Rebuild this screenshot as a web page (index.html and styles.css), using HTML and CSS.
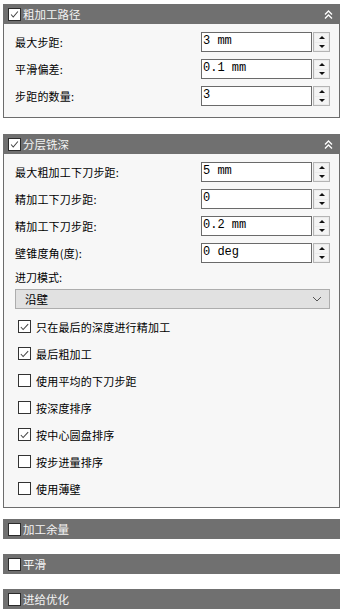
FILE: index.html
```html
<!DOCTYPE html>
<html lang="zh">
<head>
  <meta charset="UTF-8" />
  <meta name="viewport" content="width=device-width, initial-scale=1.0"/>
  <title>粗加工路径</title>
  <link rel="stylesheet" href="styles.css">
</head>
<body>

  <!-- Panel: 粗加工路径 -->
  <div class="panel primero">
    <div class="cabecera">
      <span class="casilla-cab marcada">
        <svg viewBox="0 0 13 13" width="13" height="13"><polyline points="2.5,6.5 5,9.5 10.5,3" /></svg>
      </span>
      <span class="titulo">粗加工路径</span>
      <svg class="plegar" viewBox="0 0 9 9" width="9" height="9"><polyline points="1,4.5 4.5,1 8,4.5" /><polyline points="1,8.5 4.5,5 8,8.5" /></svg>
    </div>
    <div class="cuerpo">
      <div class="fila">
        <span class="etiqueta">最大步距:</span>
        <div class="campo"><span class="valor">3 mm</span></div>
        <div class="flechas"><span class="arriba"></span><span class="abajo"></span></div>
      </div>
      <div class="fila">
        <span class="etiqueta">平滑偏差:</span>
        <div class="campo"><span class="valor">0.1 mm</span></div>
        <div class="flechas"><span class="arriba"></span><span class="abajo"></span></div>
      </div>
      <div class="fila">
        <span class="etiqueta">步距的数量:</span>
        <div class="campo"><span class="valor">3</span></div>
        <div class="flechas"><span class="arriba"></span><span class="abajo"></span></div>
      </div>
    </div>
  </div>

  <!-- Panel: 分层铣深 -->
  <div class="panel">
    <div class="cabecera">
      <span class="casilla-cab marcada">
        <svg viewBox="0 0 13 13" width="13" height="13"><polyline points="2.5,6.5 5,9.5 10.5,3" /></svg>
      </span>
      <span class="titulo">分层铣深</span>
      <svg class="plegar" viewBox="0 0 9 9" width="9" height="9"><polyline points="1,4.5 4.5,1 8,4.5" /><polyline points="1,8.5 4.5,5 8,8.5" /></svg>
    </div>
    <div class="cuerpo con-opciones">
      <div class="fila">
        <span class="etiqueta">最大粗加工下刀步距:</span>
        <div class="campo"><span class="valor">5 mm</span></div>
        <div class="flechas"><span class="arriba"></span><span class="abajo"></span></div>
      </div>
      <div class="fila">
        <span class="etiqueta">精加工下刀步距:</span>
        <div class="campo"><span class="valor">0</span></div>
        <div class="flechas"><span class="arriba"></span><span class="abajo"></span></div>
      </div>
      <div class="fila">
        <span class="etiqueta">精加工下刀步距:</span>
        <div class="campo"><span class="valor">0.2 mm</span></div>
        <div class="flechas"><span class="arriba"></span><span class="abajo"></span></div>
      </div>
      <div class="fila">
        <span class="etiqueta">壁锥度角(度):</span>
        <div class="campo"><span class="valor">0 deg</span></div>
        <div class="flechas"><span class="arriba"></span><span class="abajo"></span></div>
      </div>

      <div class="modo">进刀模式:</div>
      <div class="desplegable">
        <span>沿壁</span>
        <svg viewBox="0 0 10 6" width="10" height="6"><polyline points="1,1 5,5 9,1" /></svg>
      </div>

      <div class="opciones">
        <div class="opcion">
          <span class="casilla marcada"><svg viewBox="0 0 12 12" width="12" height="12"><polyline points="2,6 4.5,8.8 10,2.8" /></svg></span>
          只在最后的深度进行精加工
        </div>
        <div class="opcion">
          <span class="casilla marcada"><svg viewBox="0 0 12 12" width="12" height="12"><polyline points="2,6 4.5,8.8 10,2.8" /></svg></span>
          最后粗加工
        </div>
        <div class="opcion"><span class="casilla"></span>使用平均的下刀步距</div>
        <div class="opcion"><span class="casilla"></span>按深度排序</div>
        <div class="opcion">
          <span class="casilla marcada"><svg viewBox="0 0 12 12" width="12" height="12"><polyline points="2,6 4.5,8.8 10,2.8" /></svg></span>
          按中心圆盘排序
        </div>
        <div class="opcion"><span class="casilla"></span>按步进量排序</div>
        <div class="opcion"><span class="casilla"></span>使用薄壁</div>
      </div>
    </div>
  </div>

  <!-- Paneles plegados -->
  <div class="panel plegado">
    <div class="cabecera"><span class="casilla-cab"></span><span class="titulo">加工余量</span></div>
  </div>
  <div class="panel plegado">
    <div class="cabecera"><span class="casilla-cab"></span><span class="titulo">平滑</span></div>
  </div>
  <div class="panel plegado">
    <div class="cabecera"><span class="casilla-cab"></span><span class="titulo">进给优化</span></div>
  </div>

</body>
</html>
```

FILE: styles.css
```css
body {
  margin: 0;
  background: #ffffff;
  font-family: "Noto Sans CJK SC", "Noto Sans", sans-serif;
  font-size: 11px;
  color: #000;
}

.panel {
  margin: 16px 2px 0 3px;
}

.panel.primero {
  margin-top: 4px;
}

.panel.plegado {
  margin-top: 11px;
}

.panel.plegado + .panel.plegado {
  margin-top: 15px;
}

/* Barra gris del título */
.cabecera {
  height: 20px;
  background: #707070;
  display: flex;
  align-items: center;
  padding: 0 7px 0 5px;
  color: #f4f4f4;
  overflow: hidden;
}

.casilla-cab {
  width: 11px;
  height: 11px;
  border: 1px solid #2b2b2b;
  background: #ffffff;
  display: flex;
  align-items: center;
  justify-content: center;
  flex-shrink: 0;
}

.casilla-cab svg {
  fill: none;
  stroke: #404040;
  stroke-width: 1.2;
}

.titulo {
  margin-left: 2px;
  font-size: 11.5px;
  line-height: 20px;
  flex: 1;
}

.plegar {
  fill: none;
  stroke: #ffffff;
  stroke-width: 1.3;
}

.cuerpo {
  background: #f7f7f7;
  border: 1px solid #6c6c6c;
  border-top: none;
  padding: 8px 9px 11px 11px;
  display: flex;
  flex-direction: column;
  gap: 7px;
}

.cuerpo.con-opciones {
  padding-bottom: 5px;
}

.fila {
  display: flex;
  align-items: center;
  height: 20px;
}

.etiqueta {
  flex: 1;
  line-height: 20px;
  letter-spacing: 0.2px;
}

.campo {
  width: 109px;
  height: 18px;
  border: 1px solid #6a6a6a;
  background: #ffffff;
  display: flex;
  align-items: center;
}

.valor {
  font-family: "Liberation Mono", monospace;
  font-size: 12px;
  padding-left: 1px;
  margin-top: -3px;
}

/* Botones arriba / abajo */
.flechas {
  width: 15px;
  height: 18px;
  margin-left: 1px;
  border: 1px solid #b4b4b4;
  background: #ececec;
  display: flex;
  flex-direction: column;
}

.flechas span {
  flex: 1;
  display: flex;
  align-items: center;
  justify-content: center;
  background: #f4f4f4;
  margin: 1px;
}

.flechas span::after {
  content: "";
  width: 0;
  height: 0;
  border-left: 3px solid transparent;
  border-right: 3px solid transparent;
}

.flechas .arriba::after {
  border-bottom: 3px solid #111;
}

.flechas .abajo {
  margin-top: 0;
}

.flechas .abajo::after {
  border-top: 3px solid #111;
}

.modo {
  line-height: 12px;
  margin-top: 1px;
}

.desplegable {
  height: 18px;
  background: #e1e1e1;
  border: 1px solid #adadad;
  margin-top: -1px;
  display: flex;
  align-items: center;
  justify-content: space-between;
  padding: 0 7px 0 9px;
  font-size: 11.5px;
}

.desplegable svg {
  fill: none;
  stroke: #555;
  stroke-width: 1;
}

.opciones {
  display: flex;
  flex-direction: column;
  margin-top: -3px;
}

.opcion {
  height: 27px;
  display: flex;
  align-items: center;
  gap: 5px;
  padding-left: 3px;
  letter-spacing: 0.2px;
}

.casilla {
  width: 11px;
  height: 11px;
  border: 1px solid #333333;
  background: #ffffff;
  display: flex;
  align-items: center;
  justify-content: center;
}

.casilla svg {
  fill: none;
  stroke: #444;
  stroke-width: 1.1;
}
```
